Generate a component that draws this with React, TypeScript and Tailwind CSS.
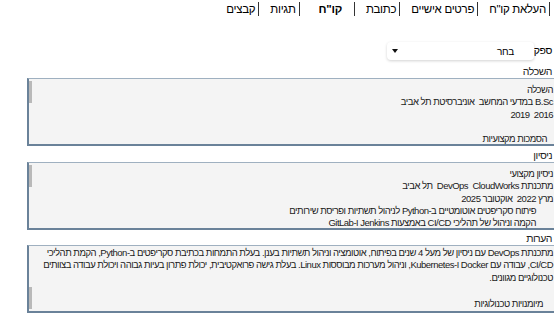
import React from "react";

const tabs = [
  { label: 'העלאת קו"ח' },
  { label: "פרטים אישיים" },
  { label: "כתובת" },
  { label: 'קו"ח', active: true },
  { label: "תגיות" },
  { label: "קבצים" },
];

const notes =
  "מתכנתת DevOps עם ניסיון של מעל 4 שנים בפיתוח, אוטומציה וניהול תשתיות בענן. בעלת התמחות בכתיבת סקריפטים ב-Python, הקמת תהליכי CI/CD, עבודה עם Docker ו-Kubernetes, וניהול מערכות מבוססות Linux. בעלת גישה פרואקטיבית, יכולת פתרון בעיות גבוהה ויכולת עבודה בצוותים טכנולוגיים מגוונים.";

function Box({
  children,
  thumb = "top",
  className = "",
}: {
  children: React.ReactNode;
  thumb?: "top" | "bottom";
  className?: string;
}) {
  return (
    <div
      className={`relative ml-[27px] -mr-[6px] h-[68px] overflow-hidden bg-[#f4f4f4] border-t border-t-[#9fb0c0] border-l-2 border-b-2 border-l-[#6a8299] border-b-[#6a8299] border-r border-r-[#6a8299] text-[9.5px] tracking-[-0.5px] leading-[12.3px] text-[#1a1a1a] ${className}`}
    >
      <span
        className={`absolute left-0 w-[3px] h-[22px] bg-[#b9b9b9] ${
          thumb === "top" ? "top-[2px]" : "bottom-[2px]"
        }`}
      />
      <div className="pr-[6px] flex flex-col">{children}</div>
    </div>
  );
}

function Label({ children }: { children: React.ReactNode }) {
  return (
    <div className="text-[10.5px] tracking-[-0.5px] leading-[14px] text-[#222] pr-[2px]">
      {children}
    </div>
  );
}

export default function App() {
  return (
    <div
      dir="rtl"
      className="w-[554px] h-[333px] overflow-hidden bg-white text-black"
      style={{ fontFamily: '"Liberation Sans", "DejaVu Sans", sans-serif' }}
    >
      <div className="flex items-center h-[18px] pr-[4px] text-[11.5px] tracking-[-0.3px] leading-[14px]">
        {tabs.map((t) => (
          <div
            key={t.label}
            className={`border-r border-r-[#333] ${
              t.active ? "font-bold pr-[12px] ml-[19px]" : "pr-[3px] ml-[11px]"
            }`}
          >
            {t.label}
          </div>
        ))}
      </div>

      <div className="flex items-center mt-[24px] h-[18px] text-[10.5px] tracking-[-0.4px]">
        <span className="pr-[2px] shrink-0 whitespace-nowrap">ספק</span>
        <div className="w-[147px] h-[18px] rounded-sm bg-white shadow-[0_1px_3px_rgba(0,0,0,0.18)] flex items-center justify-between pr-[20px] pl-[5px] text-[10px]">
          <span>בחר</span>
          <span className="w-0 h-0 border-l-[3px] border-r-[3px] border-t-[4px] border-l-transparent border-r-transparent border-t-[#111]" />
        </div>
      </div>

      <div className="mt-[4px]">
        <Label>השכלה</Label>
        <Box className="pt-[5px]">
          <div>השכלה</div>
          <div className="whitespace-pre">B.Sc במדעי המחשב  אוניברסיטת תל אביב</div>
          <div className="whitespace-pre">2016  2019</div>
          <div className="h-[12.3px]" />
          <div className="pr-[6px]">הסמכות מקצועיות</div>
        </Box>
      </div>

      <div className="mt-[2px]">
        <Label>ניסיון</Label>
        <Box className="pt-[5px]">
          <div>ניסיון מקצועי</div>
          <div className="whitespace-pre">מתכנתת DevOps  CloudWorks  תל אביב</div>
          <div className="whitespace-pre">מרץ 2022  אוקטובר 2025</div>
          <div className="pr-[17px]">
            פיתוח סקריפטים אוטומטיים ב-Python לניהול תשתיות ופריסת שירותים
          </div>
          <div className="pr-[17px]">
            הקמה וניהול של תהליכי CI/CD באמצעות Jenkins ו-GitLab
          </div>
        </Box>
      </div>

      <div className="mt-[1px]">
        <Label>הערות</Label>
        <Box thumb="bottom" className="pt-px">
          <div className="pl-[2px]">{notes}</div>
          <div className="h-[12.3px]" />
          <div className="pr-[10px] pt-[2px]">מיומנויות טכנולוגיות</div>
        </Box>
      </div>
    </div>
  );
}
